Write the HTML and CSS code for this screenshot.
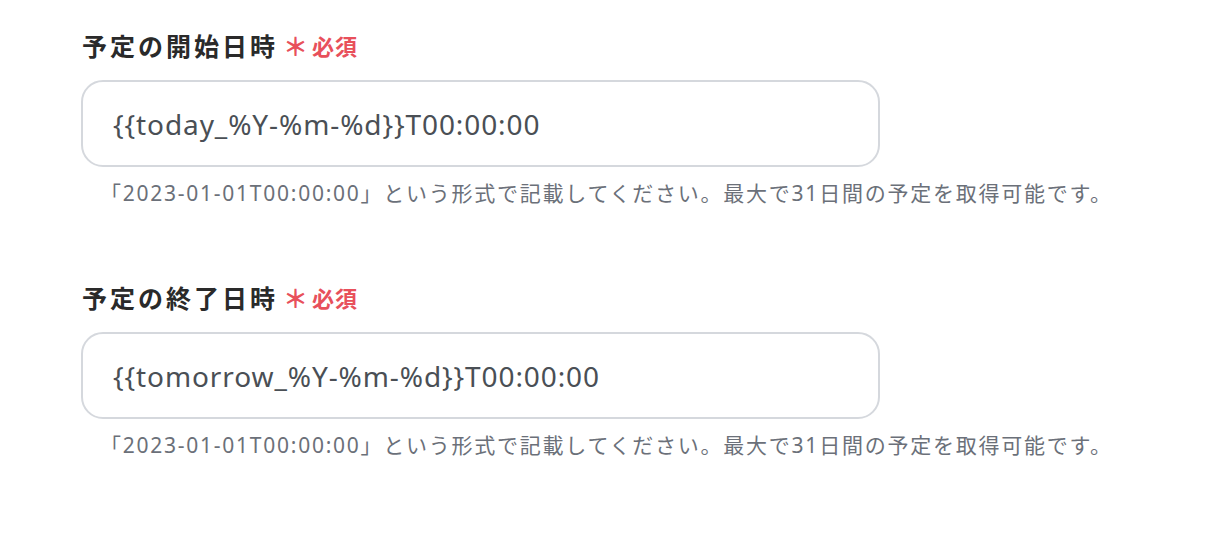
FILE: index.html
```html
<!DOCTYPE html>
<html lang="ja">
<head>
<meta charset="utf-8">
<link rel="stylesheet" href="styles.css">
</head>
<body>
<div class="form">
  <div class="field">
    <div class="label">
      <span class="label-text">予定の開始日時</span>
      <span class="req-mark">＊</span>
      <span class="req-text">必須</span>
    </div>
    <div class="input">{{today_%Y-%m-%d}}T00:00:00</div>
    <p class="hint">「2023-01-01T00:00:00」という形式で記載してください。最大で31日間の予定を取得可能です。</p>
  </div>
  <div class="field">
    <div class="label">
      <span class="label-text">予定の終了日時</span>
      <span class="req-mark">＊</span>
      <span class="req-text">必須</span>
    </div>
    <div class="input">{{tomorrow_%Y-%m-%d}}T00:00:00</div>
    <p class="hint">「2023-01-01T00:00:00」という形式で記載してください。最大で31日間の予定を取得可能です。</p>
  </div>
</div>
</body>
</html>
```

FILE: styles.css
```css
html, body {
  margin: 0;
  padding: 0;
  background: #ffffff;
}
body {
  font-family: "Noto Sans CJK JP", "Noto Sans", sans-serif;
}
.form {
  display: flex;
  flex-direction: column;
  gap: 74px;
  padding: 29px 0 0 81px;
  width: 1100px;
}
.field {
  display: flex;
  flex-direction: column;
}
.label {
  display: flex;
  align-items: center;
  height: 32px;
  padding-left: 1px;
}
.label-text {
  font-size: 25px;
  font-weight: 700;
  color: #2a2a2a;
  letter-spacing: 3px;
}
.req-mark {
  color: #e8505b;
  font-size: 25px;
  font-weight: 700;
  margin-left: 5px;
}
.req-text {
  color: #e8505b;
  font-size: 22px;
  font-weight: 700;
  margin-left: 4px;
  letter-spacing: 1px;
}
.input {
  margin-top: 19px;
  box-sizing: border-box;
  width: 799px;
  height: 87px;
  border: 2px solid #d5d8dd;
  border-radius: 22px;
  display: flex;
  align-items: center;
  padding-left: 30px;
  font-family: "Noto Sans", sans-serif;
  font-size: 28px;
  letter-spacing: 0.9px;
  color: #4a4f55;
}
.hint {
  margin: 12px 0 0 19px;
  font-family: "Noto Sans", "Noto Sans CJK JP", sans-serif;
  font-size: 21px;
  line-height: 28px;
  letter-spacing: 1.75px;
  color: #6b7079;
  white-space: nowrap;
}
```
